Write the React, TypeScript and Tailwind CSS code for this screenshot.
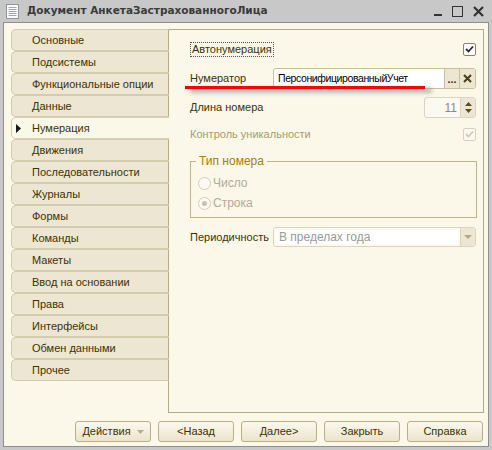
import React from 'react';

const tabs = [
  'Основные',
  'Подсистемы',
  'Функциональные опции',
  'Данные',
  'Нумерация',
  'Движения',
  'Последовательности',
  'Журналы',
  'Формы',
  'Команды',
  'Макеты',
  'Ввод на основании',
  'Права',
  'Интерфейсы',
  'Обмен данными',
  'Прочее',
];

const ACTIVE = 'Нумерация';

function DocIcon() {
  return (
    <svg width="13" height="15" viewBox="0 0 13 15">
      <rect x="0.5" y="0.5" width="12" height="14" fill="#fafafa" stroke="#8c96a6" />
      {[3, 5, 7, 9, 11].map((y) => (
        <line key={y} x1="2.5" x2="10.5" y1={y + 0.5} y2={y + 0.5} stroke="#9aa7ba" />
      ))}
    </svg>
  );
}

function CheckBox({ disabled }: { disabled?: boolean }) {
  return (
    <div
      className={`flex h-[13px] w-[13px] items-center justify-center rounded-[2px] border ${
        disabled ? 'border-[#d6d0bc] bg-[#faf8ef]' : 'border-[#8f845e] bg-white'
      }`}
    >
      <svg width="9" height="8" viewBox="0 0 9 8">
        <path
          d="M1 4 L3.5 6.5 L8 1.5"
          fill="none"
          stroke={disabled ? '#cfcabb' : '#2b2b2b'}
          strokeWidth="1.8"
        />
      </svg>
    </div>
  );
}

function Radio({ checked }: { checked?: boolean }) {
  return (
    <div className="flex h-[13px] w-[13px] items-center justify-center rounded-full border border-[#d3cdb9] bg-[#fbf9f1]">
      {checked && <div className="h-[5px] w-[5px] rounded-full bg-[#c7c1b0]" />}
    </div>
  );
}

function Btn({ children, arrow }: { children: React.ReactNode; arrow?: boolean }) {
  return (
    <div className="flex h-[21px] w-[76px] items-center justify-center gap-[6px] rounded-[3px] border border-[#b9ae84] bg-gradient-to-b from-[#fbf8ee] to-[#ebe4cd] text-[#3d3300]">
      <span>{children}</span>
      {arrow && (
        <svg width="7" height="4" viewBox="0 0 7 4">
          <path d="M0 0 H7 L3.5 4 Z" fill="#b8ad8a" />
        </svg>
      )}
    </div>
  );
}

export default function App() {
  return (
    <div
      className="flex h-[450px] w-[492px] flex-col bg-[#c8c8c8] px-[3px] pb-[3px] text-[11px] text-[#3d3300]"
      style={{ fontFamily: '"Liberation Sans", Arial, sans-serif' }}
    >
      {/* title bar */}
      <div className="flex h-[22px] items-center">
        <div className="ml-[3px] mr-[8px]">
          <DocIcon />
        </div>
        <div className="flex-1 font-['DejaVu_Sans',sans-serif] text-[10.5px] font-bold text-[#3a3a3a]">
          Документ АнкетаЗастрахованногоЛица
        </div>
        <div className="flex items-center gap-[10px] pr-[5px] text-[#333]">
          <div className="mt-[8px] h-[2px] w-[8px] bg-[#333]" />
          <div className="h-[11px] w-[11px] border-[1.5px] border-[#333]" />
          <svg width="11" height="11" viewBox="0 0 11 11">
            <path d="M1 1 L10 10 M10 1 L1 10" stroke="#333" strokeWidth="2.2" />
          </svg>
        </div>
      </div>

      {/* client area */}
      <div className="flex flex-1 flex-col border border-[#8e8e8e] bg-[#fbf8ea] pb-[4px] pl-[7px] pr-[4px] pt-[6px]">
        <div className="flex flex-1">
          {/* tab strip */}
          <div className="flex w-[158px] flex-col">
            {tabs.map((t) => {
              const active = t === ACTIVE;
              return (
                <div
                  key={t}
                  className={`relative flex h-[22px] items-center rounded-l-[5px] border-y border-l pl-[20px] ${
                    active
                      ? 'border-[#d8d0b4] border-l-[#f3c77a] bg-[#fbf8ea]'
                      : 'border-r border-[#d3cbae] border-r-[#b5aa80] bg-[#ece6d2]'
                  }`}
                >
                  {active && (
                    <svg className="absolute left-[4px] top-[6px]" width="5" height="9" viewBox="0 0 5 9">
                      <path d="M0 0 L5 4.5 L0 9 Z" fill="#1a1a1a" />
                    </svg>
                  )}
                  {t}
                </div>
              );
            })}
            <div className="flex-1 border-r border-[#b5aa80]" />
          </div>

          {/* page */}
          <div className="relative flex flex-1 flex-col border-y border-r border-[#b5aa80] pl-[21px] pr-[7px] pt-[11px]">
            <div className="flex h-[16px] items-center justify-between">
              <span className="border border-dotted border-[#555] px-px leading-[13px]">Автонумерация</span>
              <CheckBox />
            </div>

            <div className="mt-[11px] flex h-[21px] items-center">
              <span className="w-[83px]">Нумератор</span>
              <div className="flex h-[21px] flex-1 overflow-hidden rounded-[3px] border border-[#c9bf98] bg-white">
                <span className="flex flex-1 items-center pl-[4px] text-[10.5px] tracking-[-0.4px] text-black">
                  ПерсонифицированныйУчет
                </span>
                <span className="flex w-[15px] items-end justify-center border-l border-[#c9bf98] bg-[#ece6d2] pb-[3px] text-[11px] font-bold leading-none text-[#3d3300]">
                  ...
                </span>
                <span className="flex w-[16px] items-center justify-center border-l border-[#c9bf98] bg-[#ece6d2]">
                  <svg width="9" height="9" viewBox="0 0 9 9">
                    <path d="M1 1 L8 8 M8 1 L1 8" stroke="#4a3f10" strokeWidth="2" />
                  </svg>
                </span>
              </div>
            </div>

            <div className="mt-[8px] flex h-[21px] items-center">
              <span className="flex-1">Длина номера</span>
              <div className="flex h-[21px] w-[52px] overflow-hidden rounded-[3px] border border-[#dcd5bd] bg-[#fbf9f0]">
                <span className="flex flex-1 items-center justify-end pr-[3px] text-[12px] text-[#8a8a8a]">11</span>
                <span className="flex w-[15px] flex-col items-center justify-center gap-[3px] border-l border-[#dcd5bd] bg-[#ece6d2]">
                  <svg width="7" height="4" viewBox="0 0 7 4">
                    <path d="M0 4 H7 L3.5 0 Z" fill="#5b4d14" />
                  </svg>
                  <svg width="7" height="4" viewBox="0 0 7 4">
                    <path d="M0 0 H7 L3.5 4 Z" fill="#5b4d14" />
                  </svg>
                </span>
              </div>
            </div>

            <div className="mt-[8px] flex h-[16px] items-center justify-between text-[#a99b6c]">
              <span>Контроль уникальности</span>
              <CheckBox disabled />
            </div>

            {/* number type group */}
            <div className="relative mr-[-1px] mt-[19px] h-[57px] border border-[#bdb38d] pl-[7px] pt-[12px]">
              <span className="absolute left-[5px] top-[-8px] bg-[#fbf8ea] px-[3px] text-[12px] leading-[14px] text-[#a58000]">
                Тип номера
              </span>
              <div className="flex h-[18px] items-center gap-[2px] text-[12px] text-[#b1ab9a]">
                <Radio />
                Число
              </div>
              <div className="mt-[2px] flex h-[18px] items-center gap-[2px] text-[12px] text-[#b1ab9a]">
                <Radio checked />
                Строка
              </div>
            </div>

            <div className="mt-[9px] flex h-[20px] items-center">
              <span className="w-[83px]">Периодичность</span>
              <div className="flex h-[20px] flex-1 overflow-hidden rounded-[3px] border border-[#dcd5bd] bg-[#fbf9f0]">
                <span className="m-[2px] flex flex-1 items-center bg-white pl-[3px] text-[12px] text-[#9a9a9a]">В пределах года</span>
                <span className="flex w-[15px] items-center justify-center border-l border-[#dcd5bd] bg-[#ece6d2]">
                  <svg width="8" height="4" viewBox="0 0 8 4">
                    <path d="M0 0 H8 L4 4 Z" fill="#b0a787" />
                  </svg>
                </span>
              </div>
            </div>

            {/* highlight marker under the numerator row */}
            <div className="absolute left-[21px] top-[58px] h-[5px] w-[242px] bg-[#8c8c8c] opacity-60 blur-[2px]" />
            <div className="absolute left-[16px] top-[56px] h-[3px] w-[240px] bg-[#ff0000]" />
          </div>
        </div>

        {/* dialog buttons */}
        <div className="mt-[8px] flex justify-end gap-[7px] pr-[1px]">
          <Btn arrow>Действия</Btn>
          <Btn>&lt;Назад</Btn>
          <Btn>Далее&gt;</Btn>
          <Btn>Закрыть</Btn>
          <Btn>Справка</Btn>
        </div>
      </div>
    </div>
  );
}
